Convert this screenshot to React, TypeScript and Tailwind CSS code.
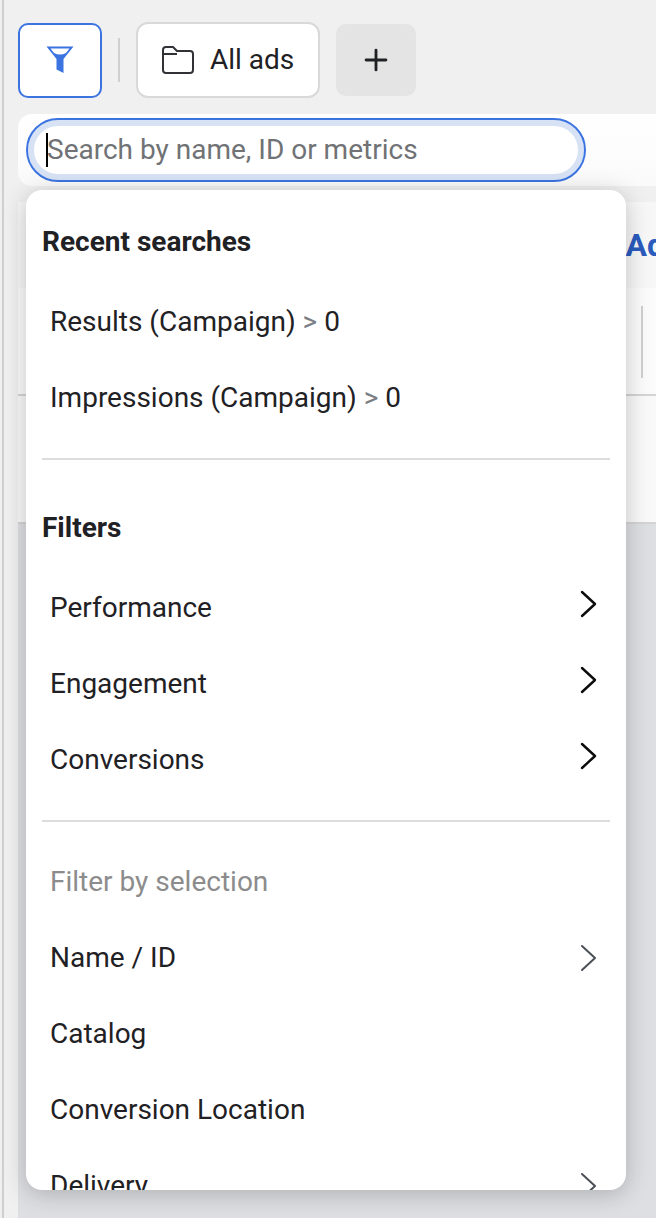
import React from "react";
import { Plus } from "lucide-react";

const Chevron = ({ gray }: { gray?: boolean }) => (
  <svg
    width="17"
    height="28"
    viewBox="0 0 17 28"
    fill="none"
    stroke={gray ? "#4b4f56" : "#0c0c0c"}
    strokeWidth={gray ? 2 : 2.4}
    strokeLinecap="round"
    strokeLinejoin="round"
    className={gray ? "mt-[1px]" : "mt-[-6px]"}
  >
    <path d="M2 2l13 12L2 26" />
  </svg>
);

const Row = ({ label, arrow, gray }: { label: React.ReactNode; arrow?: boolean; gray?: boolean }) => (
  <div className="flex h-[76px] shrink-0 items-center justify-between pl-[24px] pr-[29px]">
    <span className="mt-[2px] text-[28px] leading-[34px] text-[#1f2124]">{label}</span>
    {arrow && <Chevron gray={gray} />}
  </div>
);

const Gt = () => <span className="text-[#7b7f85]"> &gt; </span>;

export default function App() {
  return (
    <div className="relative h-[1218px] w-[656px] overflow-hidden bg-[#f0f0f0] font-['Roboto',sans-serif]">
      {/* left window edge */}
      <div className="absolute inset-y-0 left-[2px] w-[2px] bg-[#cfcfcf]" />

      <div className="flex flex-col pl-[18px]">
        {/* Toolbar */}
        <div className="flex h-[114px] items-center pt-[6px]">
          <button className="flex h-[75px] w-[84px] items-center justify-center rounded-[10px] border-2 border-[#3b74e0] bg-white">
            <svg width="30" height="30" viewBox="0 0 30 30">
              <path d="M1.500 1.500H28.500L18.500 14V28L11.500 24.500V14Z" fill="#3b74e0" />
              <path d="M5.500 3.500H24.500L21 8C17 10 13 10 9 8Z" fill="#fff" />
            </svg>
          </button>
          <div className="ml-[16px] h-[44px] w-[2px] bg-[#d0d0d0]" />
          <button className="ml-[16px] flex h-[76px] w-[184px] items-center rounded-[12px] border-2 border-[#d9d9d9] bg-white pl-[24px]">
            <svg width="32" height="28" viewBox="0 0 32 28" fill="none" stroke="#303236" strokeWidth="2">
              <path d="M1 24V4a3 3 0 0 1 3-3h7l4 4h13a3 3 0 0 1 3 3v16a3 3 0 0 1-3 3H4a3 3 0 0 1-3-3zM1 8h14" />
            </svg>
            <span className="ml-[16px] text-[28px] text-[#1f2124]">All ads</span>
          </button>
          <button className="ml-[16px] flex h-[72px] w-[80px] items-center justify-center rounded-[10px] bg-[#e4e4e4]">
            <Plus size={34} strokeWidth={2} className="text-[#1f2124]" />
          </button>
        </div>

        {/* Search bar */}
        <div className="flex h-[72px] items-center rounded-l-[14px] bg-gradient-to-b from-white to-[#fafafa] pl-[8px]">
          <div className="flex h-[64px] w-[560px] items-center rounded-[32px] border-2 border-[#3b74e0] bg-white pl-[18px] shadow-[inset_0_0_0_6px_#d8e2f5]">
            <span className="h-[34px] w-[2px] bg-black" />
            <span className="ml-[-1px] text-[28px] text-[#707275]">Search by name, ID or metrics</span>
          </div>
        </div>

        {/* Table behind the dropdown */}
        <div className="mt-[16px] flex h-[322px] flex-col rounded-tl-[14px] bg-white">
          <div className="flex h-[86px] items-center justify-end overflow-hidden bg-[#f7f7f7]">
            <span className="mr-[-9px] text-[32px] font-bold text-[#2a5bbd]">Ad</span>
          </div>
          <div className="flex h-[108px] justify-end border-b-2 border-[#d4d4d4] bg-[#fbfbfb] py-[18px]">
            <div className="mr-[13px] h-[72px] w-[2px] bg-[#d0d0d0]" />
          </div>
          <div className="flex-1 border-b-2 border-[#d4d4d4] bg-[#f9f9f9]" />
        </div>
        <div className="h-[724px] bg-[#dedfe2]" />
      </div>

      {/* Dropdown */}
      <div className="absolute left-[26px] top-[190px] flex h-[1000px] w-[600px] flex-col overflow-hidden rounded-[16px] bg-white shadow-[0_4px_24px_rgba(0,0,0,0.22)]">
        <div className="flex h-[93px] shrink-0 items-center pl-[16px] pt-[11px] text-[28px] font-bold text-[#1f2124]">
          Recent searches
        </div>
        <Row label={<>Results (Campaign)<Gt />0</>} />
        <Row label={<>Impressions (Campaign)<Gt />0</>} />
        <div className="mx-[16px] mt-[23px] h-[2px] shrink-0 bg-[#dcdcdc]" />
        <div className="flex h-[109px] shrink-0 items-center pl-[16px] pt-[27px] text-[28px] font-bold text-[#1f2124]">Filters</div>
        <Row label="Performance" arrow />
        <Row label="Engagement" arrow />
        <Row label="Conversions" arrow />
        <div className="mx-[16px] mt-[23px] h-[2px] shrink-0 bg-[#dcdcdc]" />
        <div className="flex h-[97px] shrink-0 items-center pl-[24px] pt-[23px] text-[28px] text-[#8c8c8c]">Filter by selection</div>
        <Row label="Name / ID" arrow gray />
        <Row label="Catalog" />
        <Row label="Conversion Location" />
        <Row label="Delivery" arrow gray />
      </div>
    </div>
  );
}
